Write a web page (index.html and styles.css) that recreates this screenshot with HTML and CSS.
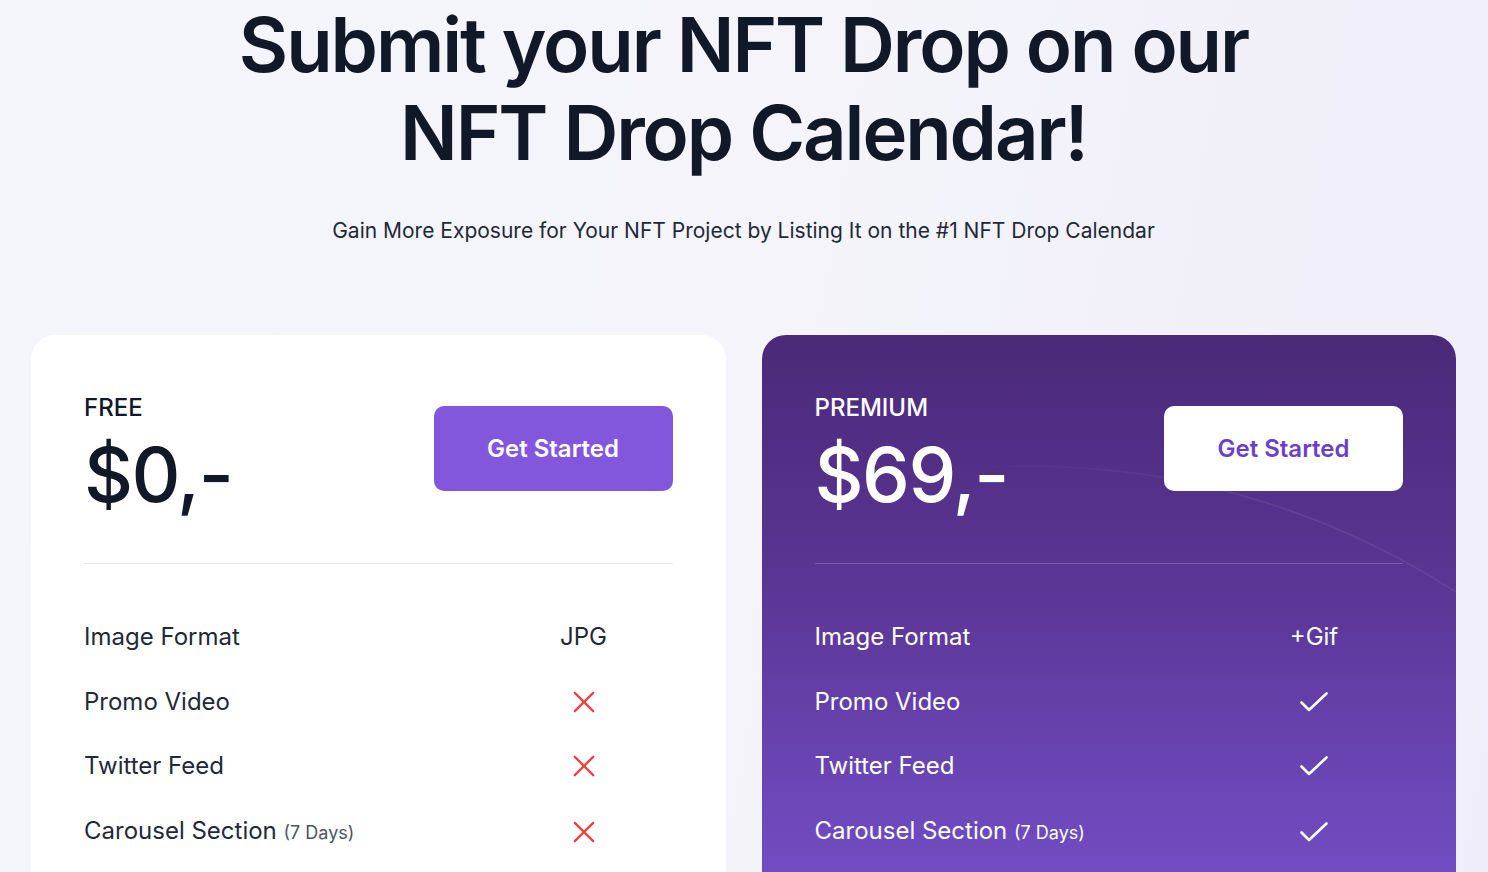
FILE: index.html
```html
<!DOCTYPE html>
<html lang="en">
<head>
<meta charset="utf-8">
<title>Submit your NFT Drop</title>
<link rel="stylesheet" href="styles.css">
</head>
<body>
<main class="page">
  <header class="hero">
    <h1 class="hero-title">Submit your NFT Drop on our<br>NFT Drop Calendar!</h1>
    <p class="hero-sub">Gain More Exposure for Your NFT Project by Listing It on the #1 NFT Drop Calendar</p>
  </header>

  <section class="plans">
    <article class="card card-free">
      <div class="card-head">
        <div class="plan-info">
          <div class="plan-name">FREE</div>
          <div class="plan-price">$0,-</div>
        </div>
        <a class="btn btn-purple" href="#">Get Started</a>
      </div>
      <hr class="divider">
      <ul class="features">
        <li class="feature"><span class="f-label">Image Format</span><span class="f-value">JPG</span></li>
        <li class="feature"><span class="f-label">Promo Video</span><span class="f-value"><svg class="icon-x" viewBox="0 0 24 24"><path d="M2 2L22 22M22 2L2 22"/></svg></span></li>
        <li class="feature"><span class="f-label">Twitter Feed</span><span class="f-value"><svg class="icon-x" viewBox="0 0 24 24"><path d="M2 2L22 22M22 2L2 22"/></svg></span></li>
        <li class="feature"><span class="f-label">Carousel Section <small class="f-note">(7 Days)</small></span><span class="f-value"><svg class="icon-x" viewBox="0 0 24 24"><path d="M2 2L22 22M22 2L2 22"/></svg></span></li>
      </ul>
    </article>

    <article class="card card-premium">
      <div class="card-head">
        <div class="plan-info">
          <div class="plan-name">PREMIUM</div>
          <div class="plan-price">$69,-</div>
        </div>
        <a class="btn btn-white" href="#">Get Started</a>
      </div>
      <hr class="divider">
      <ul class="features">
        <li class="feature"><span class="f-label">Image Format</span><span class="f-value">+Gif</span></li>
        <li class="feature"><span class="f-label">Promo Video</span><span class="f-value"><svg class="icon-check" viewBox="0 0 28 20"><path d="M1.5 10.5L9 18L26.5 1.5"/></svg></span></li>
        <li class="feature"><span class="f-label">Twitter Feed</span><span class="f-value"><svg class="icon-check" viewBox="0 0 28 20"><path d="M1.5 10.5L9 18L26.5 1.5"/></svg></span></li>
        <li class="feature"><span class="f-label">Carousel Section <small class="f-note">(7 Days)</small></span><span class="f-value"><svg class="icon-check" viewBox="0 0 28 20"><path d="M1.5 10.5L9 18L26.5 1.5"/></svg></span></li>
      </ul>
    </article>
  </section>
</main>
</body>
</html>
```

FILE: styles.css
```css
* { box-sizing: border-box; }

html, body {
  margin: 0;
  padding: 0;
}

body {
  font-family: Inter, "Noto Sans", "Liberation Sans", sans-serif;
  color: #111827;
  background: linear-gradient(100deg, #f4f6fb 0%, #f4f4fa 50%, #efedf9 100%);
  min-height: 872px;
  overflow: hidden;
}

.page {
  padding: 0 32px 0 31px;
}

.hero {
  text-align: center;
}

.hero-title {
  margin: 0;
  font-size: 76px;
  line-height: 88px;
  font-weight: 600;
  letter-spacing: -2.1px;
  color: #111827;
}

.hero-sub {
  margin: 41px 0 0;
  font-size: 21px;
  line-height: 28px;
  color: #1f2937;
}

.plans {
  margin-top: 90px;
  display: grid;
  grid-template-columns: 1fr 1fr;
  gap: 36px;
}

.card {
  position: relative;
  overflow: hidden;
  border-radius: 24px;
  padding: 59px 53px 60px;
  min-height: 600px;
}

.card-free {
  background: #ffffff;
}

.card-premium {
  background: linear-gradient(180deg, #4a2979 0%, #5a3593 40%, #6a46b6 75%, #7552c8 100%);
  color: #ffffff;
}

.card-premium::before {
  content: "";
  position: absolute;
  left: -520px;
  top: 130px;
  width: 1570px;
  height: 1570px;
  border-radius: 50%;
  border: 2px solid rgba(255, 255, 255, 0.07);
  -webkit-mask-image: linear-gradient(90deg, transparent 0%, transparent 45%, #000 65%, #000 100%);
  mask-image: linear-gradient(90deg, transparent 0%, transparent 45%, #000 65%, #000 100%);
  pointer-events: none;
}

.card-head {
  position: relative;
  display: flex;
  justify-content: space-between;
  align-items: flex-start;
}

.plan-name {
  font-size: 24px;
  line-height: 28px;
  font-weight: 500;
}

.plan-price {
  margin-top: 12px;
  font-size: 76px;
  line-height: 80px;
  font-weight: 500;
  letter-spacing: -1.5px;
}

.card-free .plan-name,
.card-free .plan-price {
  color: #111827;
}

.btn {
  display: flex;
  align-items: center;
  justify-content: center;
  width: 239px;
  height: 85px;
  margin-top: 12px;
  border-radius: 10px;
  font-size: 24px;
  font-weight: 600;
  text-decoration: none;
}

.btn-purple {
  background: #8257db;
  color: #ffffff;
}

.btn-white {
  background: #ffffff;
  color: #6a3fcf;
}

.divider {
  position: relative;
  margin: 49px 0 0;
  border: 0;
  height: 1px;
  background: #e5e7eb;
}

.card-premium .divider {
  background: rgba(255, 255, 255, 0.18);
}

.features {
  position: relative;
  list-style: none;
  margin: 57px 0 0;
  padding: 0;
  display: flex;
  flex-direction: column;
  gap: 32.5px;
}

.feature {
  display: grid;
  grid-template-columns: 1fr 178px;
  align-items: center;
  height: 32px;
  font-size: 24px;
  line-height: 32px;
}

.card-free .f-label,
.card-free .f-value {
  color: #1f2937;
}

.f-value {
  display: flex;
  justify-content: center;
  align-items: center;
}

.f-note {
  font-size: 18px;
  color: #4b5563;
}

.card-premium .f-note {
  color: #ffffff;
}

.icon-x {
  width: 22px;
  height: 22px;
  fill: none;
  stroke: #ef4444;
  stroke-width: 2.6;
  stroke-linecap: round;
}

.icon-check {
  width: 28px;
  height: 20px;
  fill: none;
  stroke: #ffffff;
  stroke-width: 2.6;
  stroke-linecap: round;
  stroke-linejoin: round;
}
```
